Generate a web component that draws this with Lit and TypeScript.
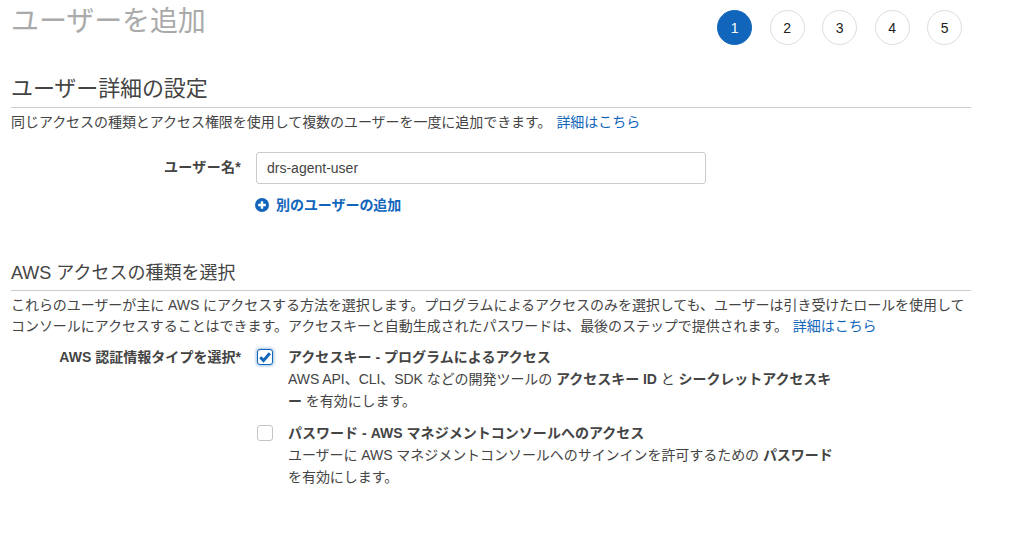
import { LitElement, html, css } from "lit";
import { customElement } from "lit/decorators.js";

@customElement("app-root")
export class AppRoot extends LitElement {
  static styles = css`
    :host {
      display: block;
      width: 1028px;
      height: 537px;
      overflow: hidden;
      background: #fff;
      font-family: "Liberation Sans", "Noto Sans CJK JP", sans-serif;
      font-size: 14px;
      line-height: 22px;
      color: #444;
      letter-spacing: -0.05px;
    }
    .page { width: 960px; margin-left: 11px; }
    .top { display: flex; justify-content: space-between; height: 76px; }
    h1 { margin: 0; font-size: 28px; font-weight: 400; line-height: 44px; color: #aaa; letter-spacing: -0.1px; }
    .steps { display: flex; gap: 17.5px; padding: 10px 9px 0 0; }
    .step {
      width: 35px; height: 35px; box-sizing: border-box; border-radius: 50%;
      border: 1px solid #ddd; display: flex; align-items: center; justify-content: center;
      color: #222; font-size: 14px;
    }
    .step.on { background: #1166bb; border-color: #1166bb; color: #fff; }
    h2 {
      margin: 0; font-size: 22px; font-weight: 400; line-height: 26px; color: #444;
      border-bottom: 1px solid #ccc; height: 31px; letter-spacing: -0.1px;
    }
    p { margin: 0; }
    a { color: #1166bb; text-decoration: none; }
    .desc { margin-top: 4px; line-height: 21px; }
    .desc a { margin-left: 1px; }
    .row { display: grid; grid-template-columns: 230px 1fr; column-gap: 15px; }
    .label { text-align: right; font-weight: 700; letter-spacing: 0.03px; }
    .name { margin-top: 19px; align-items: center; }
    .name .label { padding-bottom: 2px; letter-spacing: 0.3px; }
    input {
      width: 450px; height: 32px; box-sizing: border-box; border: 1px solid #ccc; border-radius: 3px;
      padding: 0 10px; font: inherit; color: #444; outline: none; background: #fff;
      display: block;
    }
    .add { margin: 10px 0 0 244px; display: flex; align-items: center; gap: 7px; font-weight: 700; height: 22px; }
    .add svg { display: block; }
    h2.sec2 { margin-top: 43px; font-size: 18px; line-height: 28px; letter-spacing: 0; }
    .access { margin-top: 9px; }
    .opt { display: flex; gap: 15px; width: 576px; margin-left: 1px; }
    .opt + .opt { margin-top: 10px; }
    .box {
      flex: none; width: 16px; height: 16px; margin-top: 3px; box-sizing: border-box;
      border: 1px solid #c4c4c4; border-radius: 3px; background: #fff;
    }
    .box.on {
      border-color: #1166bb; box-shadow: 0 0 3px 1px rgba(17,102,187,.4);
      display: flex; align-items: center; justify-content: center;
    }
    .box svg { display: block; }
    .opt .title { display: block; letter-spacing: 0.03px; }
    .opt .text { display: block; }
  `;

  render() {
    return html`
      <div class="page">
        <div class="top">
          <h1>ユーザーを追加</h1>
          <div class="steps">
            ${[1, 2, 3, 4, 5].map((n) => html`<div class="step ${n === 1 ? "on" : ""}">${n}</div>`)}
          </div>
        </div>
        <h2>ユーザー詳細の設定</h2>
        <p class="desc">同じアクセスの種類とアクセス権限を使用して複数のユーザーを一度に追加できます。 <a href="#">詳細はこちら</a></p>
        <div class="row name">
          <div class="label">ユーザー名*</div>
          <div><input .value=${"drs-agent-user"} /></div>
        </div>
        <a class="add" href="#">
          <svg width="14" height="14" viewBox="0 0 14 14"><circle cx="7" cy="7" r="7" fill="#1166bb"/><path d="M7 3.2v7.6M3.2 7h7.6" stroke="#fff" stroke-width="2.4"/></svg>
          別のユーザーの追加
        </a>
        <h2 class="sec2">AWS アクセスの種類を選択</h2>
        <p class="desc">これらのユーザーが主に AWS にアクセスする方法を選択します。プログラムによるアクセスのみを選択しても、ユーザーは引き受けたロールを使用して<br />コンソールにアクセスすることはできます。アクセスキーと自動生成されたパスワードは、最後のステップで提供されます。 <a href="#">詳細はこちら</a></p>
        <div class="row access">
          <div class="label">AWS 認証情報タイプを選択*</div>
          <div>
            <div class="opt">
              <div class="box on"><svg width="12" height="11" viewBox="0 0 12 11"><path d="M1.3 5.3 4.5 8.6 10.8 1.2" fill="none" stroke="#1166bb" stroke-width="3"/></svg></div>
              <div><b class="title">アクセスキー - プログラムによるアクセス</b><span class="text">AWS API、CLI、SDK などの開発ツールの <b>アクセスキー ID</b> と <b>シークレットアクセスキー</b> を有効にします。</span></div>
            </div>
            <div class="opt">
              <div class="box"></div>
              <div><b class="title">パスワード - AWS マネジメントコンソールへのアクセス</b><span class="text">ユーザーに AWS マネジメントコンソールへのサインインを許可するための <b>パスワード</b> を有効にします。</span></div>
            </div>
          </div>
        </div>
      </div>
    `;
  }
}
